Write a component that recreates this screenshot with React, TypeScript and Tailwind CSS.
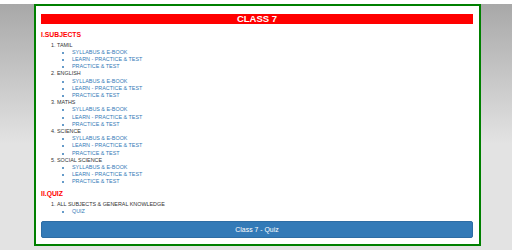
import React from 'react';

const subjects = ['TAMIL', 'ENGLISH', 'MATHS', 'SCIENCE', 'SOCIAL SCIENCE'];
const links = ['SYLLABUS & E-BOOK', 'LEARN - PRACTICE & TEST', 'PRACTICE & TEST'];

export default function App() {
  return (
    <div className="w-[512px] h-[250px] overflow-hidden border-t-4 border-white bg-[linear-gradient(to_bottom,#a8a8a8_0px,#e3e3e3_140px,#e3e3e3_100%)] font-['Liberation_Sans',Arial,sans-serif]">
      <div className="ml-[34px] w-[447px] h-[242px] border-2 border-[#008000] bg-white pt-[8px] pl-[5px] pr-[6px]">
        {/* Title bar */}
        <div className="h-[10px] bg-[#ff0000] flex items-center justify-center">
          <span className="text-white font-bold text-[9.5px] leading-[10px]">CLASS 7</span>
        </div>

        <h2 className="mt-[6.5px] text-[#ff0000] font-bold text-[6.8px] leading-[8px]">I.SUBJECTS</h2>
        <ol className="mt-[3px] ml-[16px] list-decimal text-[5.4px] leading-[7.2px] text-[#333]">
          {subjects.map((s) => (
            <li key={s}>
              {s}
              <ul className="pl-[15px] list-disc">
                {links.map((l) => (
                  <li key={l} className="text-[#337ab7]">{l}</li>
                ))}
              </ul>
            </li>
          ))}
        </ol>

        <h2 className="mt-[4px] text-[#ff0000] font-bold text-[6.8px] leading-[8px]">II.QUIZ</h2>
        <ol className="mt-[3px] ml-[16px] list-decimal text-[5.4px] leading-[7.2px] text-[#333]">
          <li>
            ALL SUBJECTS &amp; GENERAL KNOWLEDGE
            <ul className="pl-[15px] list-disc">
              <li className="text-[#337ab7]">QUIZ</li>
            </ul>
          </li>
        </ol>

        <button className="mt-[4.5px] w-full h-[17px] rounded-[2px] bg-[#337ab7] border border-[#2e6da4] text-white text-[6.9px] leading-[15px]">
          Class 7 - Quiz
        </button>
      </div>
    </div>
  );
}
